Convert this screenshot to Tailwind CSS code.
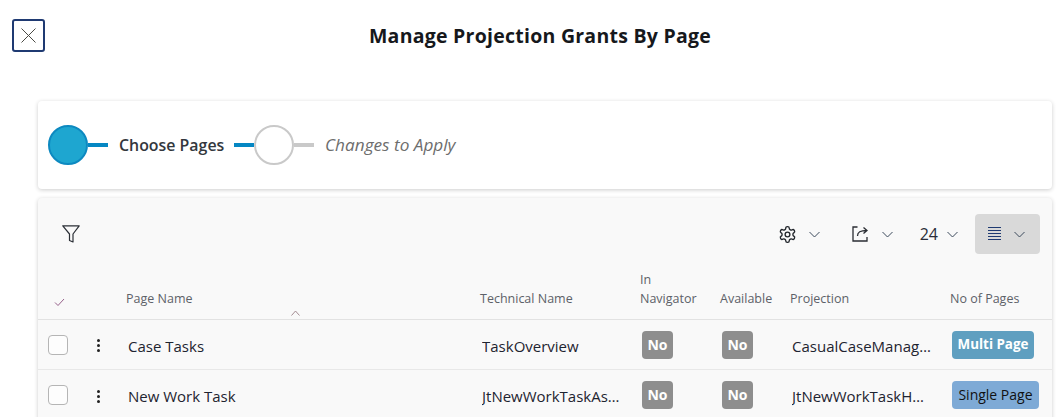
<!DOCTYPE html>
<html lang="en">
<head>
    <meta charset="UTF-8">
    <meta name="viewport" content="width=device-width, initial-scale=1.0">
    <title>Manage Projection Grants By Page</title>
    <script src="https://cdn.jsdelivr.net/npm/@tailwindcss/browser@4"></script>
</head>
<body class="bg-white font-['Open_Sans',sans-serif] text-[#1b1b1b] h-[417px] w-[1056px] overflow-hidden">
    <!-- Header -->
    <div class="h-[101px]">
        <div class="flex items-start pt-[19px] pl-3">
            <button class="w-[33px] h-[33px] rounded-[3px] border-2 border-[#1f3a72] flex items-center justify-center">
                <svg width="15" height="15" viewBox="0 0 15 15" fill="none" stroke="#4a4a44" stroke-width="1"><path d="M.5 .5 L14.5 14.5 M14.5 .5 L.5 14.5"/></svg>
            </button>
            <h1 class="w-[990px] text-center text-[19.5px] leading-[34px] font-bold tracking-[0.25px] text-[#16181c]">Manage Projection Grants By Page</h1>
        </div>
    </div>

    <!-- Stepper -->
    <div class="ml-[38px] w-[1014px] h-[88px] bg-white rounded-[4px] shadow-[0_1px_4px_rgba(0,0,0,0.2)] flex items-center pl-[10px]">
        <span class="w-10 h-10 rounded-full bg-[#1ea6d0] border-2 border-[#0d89c0]"></span>
        <span class="w-5 h-1 bg-[#0587c3]"></span>
        <span class="ml-[11px] w-[106px] pt-px whitespace-nowrap text-[15.9px] text-[#33373d] font-semibold">Choose Pages</span>
        <span class="ml-[9px] w-5 h-1 bg-[#0587c3]"></span>
        <span class="w-10 h-10 rounded-full bg-white border-2 border-[#c9c9c9]"></span>
        <span class="w-5 h-1 bg-[#c9c9c9]"></span>
        <span class="ml-[11px] text-[17.2px] italic text-[#6d6d6d]">Changes to Apply</span>
    </div>

    <!-- Table card -->
    <div class="ml-[38px] mt-[9px] w-[1014px] h-[300px] pt-4 bg-[#f9f9f9] rounded-t-[4px] shadow-[0_1px_4px_rgba(0,0,0,0.2)]">
        <!-- Toolbar -->
        <div class="flex items-center h-10">
            <svg class="ml-[24px]" width="18" height="18" viewBox="0 0 18 18" fill="none" stroke="#2b2f36" stroke-width="1.2" stroke-linejoin="round"><path d="M.8 .8 H17.2 L11 9 V17 L7.5 15.5 V9 Z"/></svg>
            <div class="ml-auto flex items-center h-10">
                <svg width="19" height="19" viewBox="0 0 24 24" fill="none" stroke="#22262c" stroke-width="1.7"><path d="M12.22 2h-.44a2 2 0 0 0-2 2v.18a2 2 0 0 1-1 1.73l-.43.25a2 2 0 0 1-2 0l-.15-.08a2 2 0 0 0-2.73.73l-.22.38a2 2 0 0 0 .73 2.73l.15.1a2 2 0 0 1 1 1.72v.51a2 2 0 0 1-1 1.74l-.15.09a2 2 0 0 0-.73 2.73l.22.38a2 2 0 0 0 2.73.73l.15-.08a2 2 0 0 1 2 0l.43.25a2 2 0 0 1 1 1.73V20a2 2 0 0 0 2 2h.44a2 2 0 0 0 2-2v-.18a2 2 0 0 1 1-1.73l.43-.25a2 2 0 0 1 2 0l.15.08a2 2 0 0 0 2.73-.73l.22-.39a2 2 0 0 0-.73-2.73l-.15-.08a2 2 0 0 1-1-1.74v-.5a2 2 0 0 1 1-1.74l.15-.09a2 2 0 0 0 .73-2.73l-.22-.38a2 2 0 0 0-2.73-.73l-.15.08a2 2 0 0 1-2 0l-.43-.25a2 2 0 0 1-1-1.73V4a2 2 0 0 0-2-2z"/><circle cx="12" cy="12" r="3"/></svg>
                <svg class="ml-[12px]" width="11" height="7" viewBox="0 0 11 7" fill="none" stroke="#3d4a5c" stroke-width="1"><path d="M.5 1 L5.5 6 L10.5 1"/></svg>
                <svg class="ml-[32px]" width="16" height="16" viewBox="0 0 16 16" fill="none" stroke="#2a2d33" stroke-width="1.3"><path d="M5.5 1H1v14h14v-4"/><path d="M5.5 10c0-4 2.5-5.5 9.5-5.5M11.5 1.5l3.5 3-3.5 3"/></svg>
                <svg class="ml-[14px]" width="11" height="7" viewBox="0 0 11 7" fill="none" stroke="#3d4a5c" stroke-width="1"><path d="M.5 1 L5.5 6 L10.5 1"/></svg>
                <span class="ml-[27px] text-base leading-none text-[#2a2c38]">24</span>
                <svg class="ml-[9px]" width="11" height="7" viewBox="0 0 11 7" fill="none" stroke="#3d4a5c" stroke-width="1"><path d="M.5 1 L5.5 6 L10.5 1"/></svg>
                <div class="ml-[17px] mr-3 w-[65px] h-10 rounded-[4px] bg-[#d9d9d9] flex items-center pl-[13px]">
                    <svg width="13" height="14" viewBox="0 0 13 14" stroke="#1f3a72" stroke-width="1"><path d="M0 .5h13M0 3.5h13M0 6.5h13M0 9.5h13M0 12.5h13"/></svg>
                    <svg class="ml-[13px]" width="11" height="7" viewBox="0 0 11 7" fill="none" stroke="#3d4a5c" stroke-width="1"><path d="M.5 1 L5.5 6 L10.5 1"/></svg>
                </div>
            </div>
        </div>

        <!-- Column headers -->
        <div class="flex items-end h-[66px] pb-[11px] border-b border-[#e2e2e2] text-[12.5px] leading-[19px] text-[#5d6168] relative">
            <div class="w-[88px] pl-[16px] pb-[1px]">
                <svg width="11" height="9" viewBox="0 0 11 9" fill="none" stroke="#8a4f7d" stroke-width="0.9"><path d="M1 4.5 L4 7.5 L10 1"/></svg>
            </div>
            <div class="w-[354px]">Page Name</div>
            <div class="w-[160px]">Technical Name</div>
            <div class="w-[80px]">In<br>Navigator</div>
            <div class="w-[70px]">Available</div>
            <div class="w-[160px]">Projection</div>
            <div>No of Pages</div>
            <svg class="absolute left-[253px] bottom-[3px]" width="9" height="6" viewBox="0 0 9 6" fill="none" stroke="#9a7f86" stroke-width="0.9"><path d="M.5 5.5 L4.5 1 L8.5 5.5"/></svg>
        </div>

        <!-- Rows -->
        <div class="flex items-center h-[50px] border-b border-[#e8e8e8] text-[15px] text-[#1e2430]">
            <div class="w-[50px] pl-[10px]"><span class="block w-5 h-5 rounded-[4px] border border-[#b5b5b5] bg-white/60"></span></div>
            <div class="w-[20px] pt-[2px] flex flex-col items-center gap-[2px]"><span class="w-[3px] h-[3px] rounded-full bg-[#222]"></span><span class="w-[3px] h-[3px] rounded-full bg-[#222]"></span><span class="w-[3px] h-[3px] rounded-full bg-[#222]"></span></div>
            <div class="w-[374px] pl-5 pt-[3px]">Case Tasks</div>
            <div class="w-[160px] truncate pr-5 pt-[3px]">TaskOverview</div>
            <div class="w-[80px]"><span class="inline-flex items-center justify-center w-[31px] h-7 rounded-[4px] bg-[#8e8e8e] text-white font-bold text-sm">No</span></div>
            <div class="w-[70px]"><span class="inline-flex items-center justify-center w-[31px] h-7 rounded-[4px] bg-[#8e8e8e] text-white font-bold text-sm">No</span></div>
            <div class="w-[160px] truncate pr-5 pt-[3px]">CasualCaseManagement</div>
            <div><span class="inline-flex items-center justify-center w-[82px] h-7 rounded-[4px] bg-[#5f9fc0] text-white font-bold text-[13.4px]">Multi Page</span></div>
        </div>
        <div class="flex items-center h-[50px] text-[15px] text-[#1e2430]">
            <div class="w-[50px] pl-[10px]"><span class="block w-5 h-5 rounded-[4px] border border-[#b5b5b5] bg-white/60"></span></div>
            <div class="w-[20px] pt-[2px] flex flex-col items-center gap-[2px]"><span class="w-[3px] h-[3px] rounded-full bg-[#222]"></span><span class="w-[3px] h-[3px] rounded-full bg-[#222]"></span><span class="w-[3px] h-[3px] rounded-full bg-[#222]"></span></div>
            <div class="w-[374px] pl-5 pt-[2px]">New Work Task</div>
            <div class="w-[160px] truncate pr-5 pt-[2px]">JtNewWorkTaskAssistant</div>
            <div class="w-[80px]"><span class="inline-flex items-center justify-center w-[31px] h-7 rounded-[4px] bg-[#8e8e8e] text-white font-bold text-sm">No</span></div>
            <div class="w-[70px]"><span class="inline-flex items-center justify-center w-[31px] h-7 rounded-[4px] bg-[#8e8e8e] text-white font-bold text-sm">No</span></div>
            <div class="w-[160px] truncate pr-5 pt-[2px]">JtNewWorkTaskHandling</div>
            <div><span class="inline-flex items-center justify-center w-[87px] h-7 rounded-[4px] bg-[#7eaad6] text-[#111] font-medium text-sm">Single Page</span></div>
        </div>
    </div>
</body>
</html>
